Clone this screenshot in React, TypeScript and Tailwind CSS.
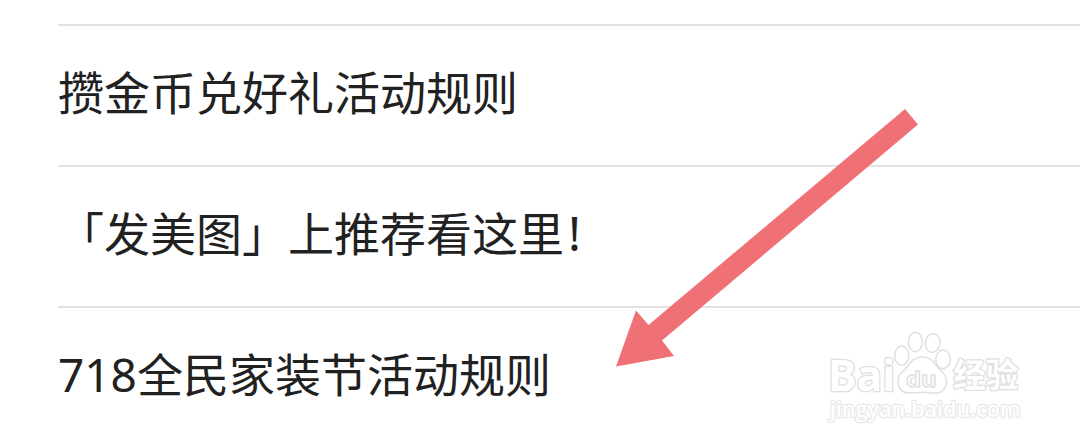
interface Rule {
  prefix?: string;
  title: string;
  suffix?: string;
}

const rules: Rule[] = [
  { title: '攒金币兑好礼活动规则' },
  { title: '「发美图」上推荐看这里', suffix: '!' },
  { prefix: '718', title: '全民家装节活动规则' },
];

function Watermark() {
  return (
    <svg
      viewBox="0 0 630 315"
      className="absolute right-[50px] bottom-[17px] h-[105px] w-[210px] font-['Open_Sans','Noto_Sans_CJK_SC',sans-serif] font-bold"
      fill="#fff"
      stroke="#e0e0e0"
      strokeWidth="4.5"
      strokeLinejoin="round"
    >
      <g paintOrder="stroke" strokeWidth="8">
        <text x="24" y="199" fontSize="130" textLength="202" lengthAdjust="spacingAndGlyphs">Bai</text>
        <text x="400" y="187" fontSize="98" textLength="195" lengthAdjust="spacingAndGlyphs">经验</text>
        <text x="29" y="276" fontSize="63" fontWeight="600" strokeWidth="7" stroke="#e8e8e8" textLength="573" lengthAdjust="spacingAndGlyphs">
          jingyan.baidu.com
        </text>
      </g>
      <ellipse cx="245" cy="92" rx="21" ry="29" />
      <ellipse cx="286" cy="51" rx="21" ry="29" />
      <ellipse cx="338" cy="54" rx="22" ry="28" transform="rotate(8 338 54)" />
      <ellipse cx="369" cy="103" rx="22" ry="28" />
      <path d="M307 96C273 96 268 124 248 139C230 153 230 181 244 196C259 210 284 202 307 202C334 202 355 211 370 195C385 178 382 154 364 138C345 123 340 96 307 96Z" />
      <text x="258" y="185" fontSize="62" strokeWidth="4" textLength="92" lengthAdjust="spacingAndGlyphs">du</text>
    </svg>
  );
}

export default function App() {
  return (
    <main className="relative h-[447px] overflow-hidden bg-white pt-6 pl-[58px] font-['Noto_Sans_CJK_SC',sans-serif] text-[#212121]">
      <ul className="flex flex-col">
        {rules.map((rule) => (
          <li
            key={rule.title}
            className="flex h-[141px] items-baseline border-t-2 border-[#e2e2e2] pt-[30px] text-[46px] leading-[68px] whitespace-nowrap"
          >
            {rule.prefix && <span className="font-['Noto_Sans',sans-serif]">{rule.prefix}</span>}
            <span>{rule.title}</span>
            {rule.suffix && <span className="pl-1 font-['Noto_Sans',sans-serif] text-[48px]">{rule.suffix}</span>}
          </li>
        ))}
      </ul>

      <Watermark />

      {/* Pointer arrow */}
      <svg viewBox="0 0 304 258" className="absolute top-[109px] left-[616px] h-[258px] w-[304px]" fill="#ef7176">
        <path d="M289 0L302 15.5L46 231.5L58 247L0 257.5L20 201.5L32.5 216Z" />
      </svg>
    </main>
  );
}
